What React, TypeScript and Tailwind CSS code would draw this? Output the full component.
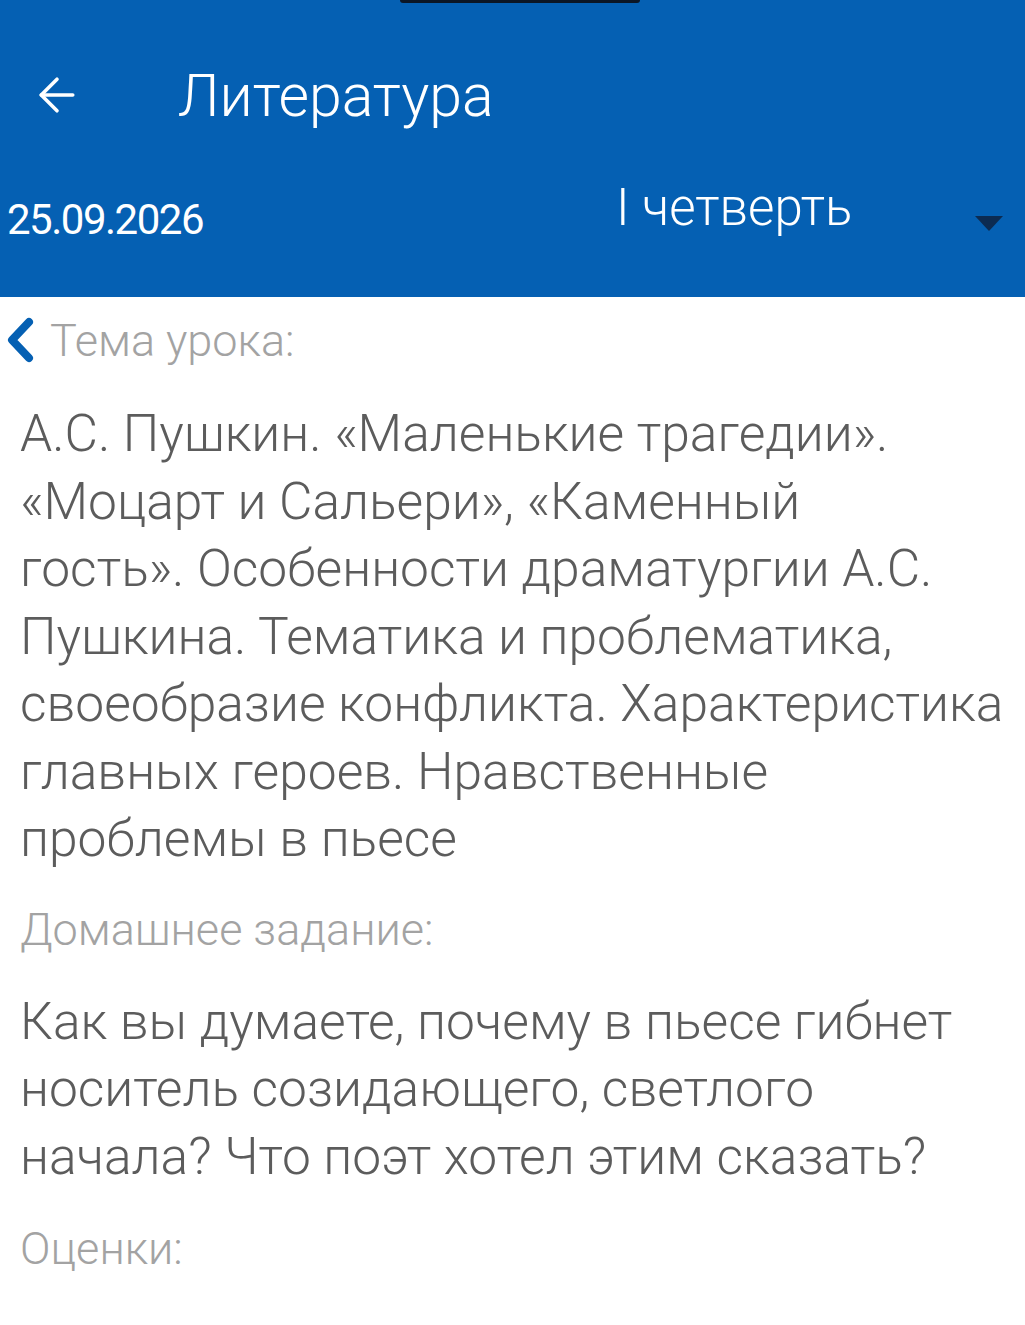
import { ArrowLeft } from "lucide-react";

const topic = [
  "А.С. Пушкин. «Маленькие трагедии».",
  "«Моцарт и Сальери», «Каменный",
  "гость». Особенности драматургии А.С.",
  "Пушкина. Тематика и проблематика,",
  "своеобразие конфликта. Характеристика",
  "главных героев. Нравственные",
  "проблемы в пьесе",
];

const homework = [
  "Как вы думаете, почему в пьесе гибнет",
  "носитель созидающего, светлого",
  "начала? Что поэт хотел этим сказать?",
];

function Lines({ lines }: { lines: string[] }) {
  return (
    <div className="text-[51.5px] leading-[67.5px] font-light text-[#5c5c5c]">
      {lines.map((l) => (
        <div key={l} className="whitespace-nowrap">{l}</div>
      ))}
    </div>
  );
}

export default function App() {
  return (
    <div className="w-[1025px] h-[1325px] bg-white overflow-hidden font-['Roboto',sans-serif]">
      <header className="relative h-[297px] bg-[#0560b3] text-white flex flex-col">
        <div className="absolute left-[400px] top-0 w-[240px] h-[3px] rounded-b-full bg-[#0b1626]" />
        <div className="mt-[60px] h-[70px] flex items-center">
          <ArrowLeft className="ml-[30px] w-[54px] h-[54px]" strokeWidth={1.6} />
          <h1 className="ml-[94px] text-[59px] leading-none font-light">Литература</h1>
        </div>
        <div className="mt-[52px] flex items-end">
          <div className="ml-[7px] text-[42px] leading-none tracking-[-1.5px] pb-[2px]">25.09.2026</div>
          <div className="ml-[413px] text-[51px] leading-none font-light pb-[10px]">I четверть</div>
          <svg className="ml-auto mr-[22px] mb-[12px]" width="28" height="15" viewBox="0 0 28 15">
            <path d="M0 0 L28 0 L14 15 Z" fill="#0c2b52" />
          </svg>
        </div>
      </header>

      <main className="pl-[20px] pr-[10px]">
        <div className="mt-[20px] flex items-center -ml-[16px]">
          <svg width="32" height="46" viewBox="0 0 32 46">
            <polyline points="25,5 8,23 25,41" fill="none" stroke="#0560b3" strokeWidth="8" strokeLinecap="round" strokeLinejoin="round" />
          </svg>
          <span className="ml-[14px] text-[45px] font-light text-[#a3a3a3] leading-none">Тема урока:</span>
        </div>
        <div className="mt-[37px]">
          <Lines lines={topic} />
        </div>
        <div className="mt-[34px] text-[45px] font-light text-[#a3a3a3] leading-none">Домашнее задание:</div>
        <div className="mt-[36px]">
          <Lines lines={homework} />
        </div>
        <div className="mt-[36px] text-[45px] font-light text-[#a3a3a3] leading-none">Оценки:</div>
      </main>
    </div>
  );
}
